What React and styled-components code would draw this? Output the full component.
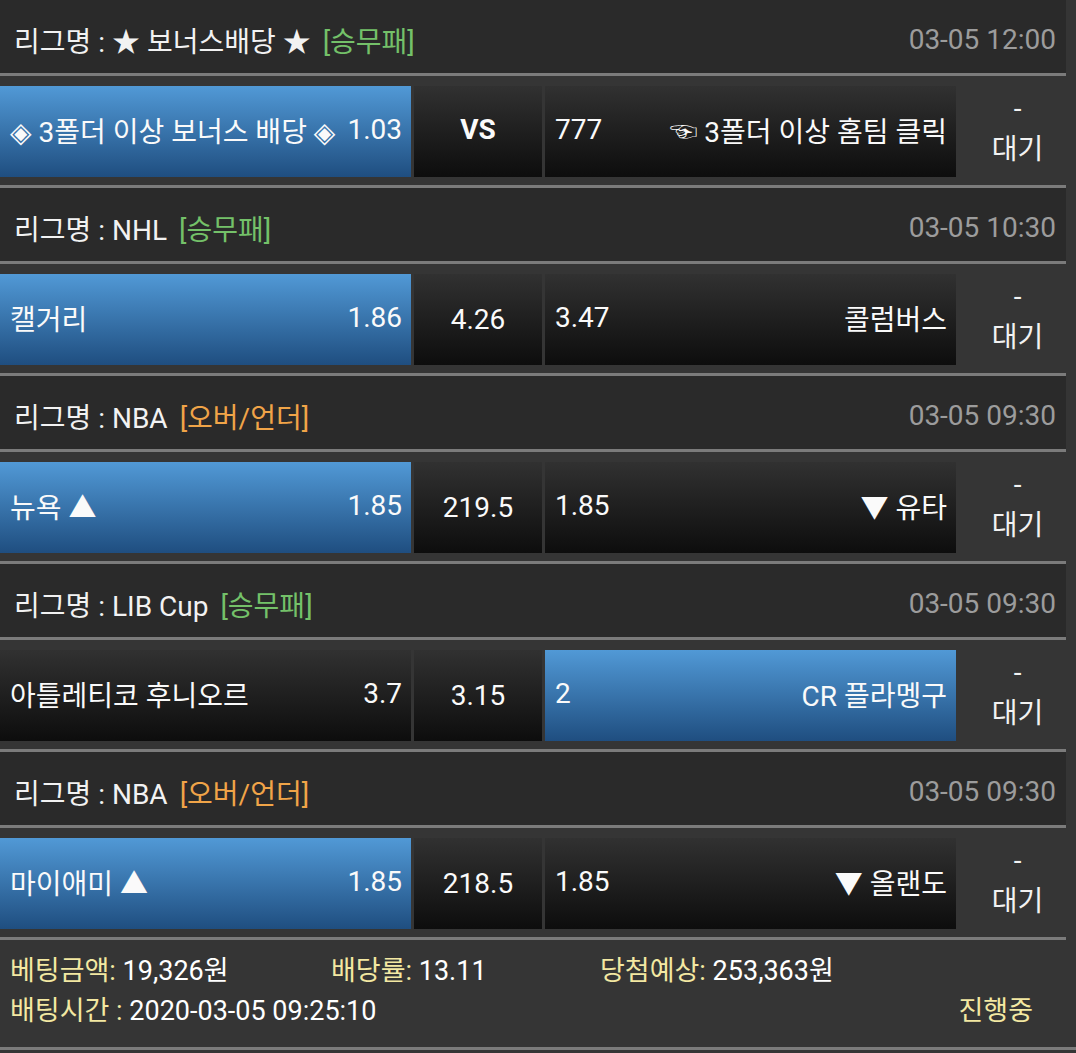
import styled, { createGlobalStyle } from "styled-components";

const GlobalStyle = createGlobalStyle`
  body {
    margin: 0;
    background: #353535;
    font-family: Roboto, "Noto Sans CJK KR", "DejaVu Sans", sans-serif;
  }
`;

const games = [
  {
    league: "★ 보너스배당 ★",
    tag: "[승무패]",
    tagType: "win",
    time: "03-05 12:00",
    home: "◈ 3폴더 이상 보너스 배당 ◈",
    homeOdds: "1.03",
    draw: "VS",
    awayOdds: "777",
    away: "☜ 3폴더 이상 홈팀 클릭",
    pick: "home",
    bold: true,
  },
  {
    league: "NHL",
    tag: "[승무패]",
    tagType: "win",
    time: "03-05 10:30",
    home: "캘거리",
    homeOdds: "1.86",
    draw: "4.26",
    awayOdds: "3.47",
    away: "콜럼버스",
    pick: "home",
  },
  {
    league: "NBA",
    tag: "[오버/언더]",
    tagType: "ou",
    time: "03-05 09:30",
    home: "뉴욕 ▲",
    homeOdds: "1.85",
    draw: "219.5",
    awayOdds: "1.85",
    away: "▼ 유타",
    pick: "home",
  },
  {
    league: "LIB Cup",
    tag: "[승무패]",
    tagType: "win",
    time: "03-05 09:30",
    home: "아틀레티코 후니오르",
    homeOdds: "3.7",
    draw: "3.15",
    awayOdds: "2",
    away: "CR 플라멩구",
    pick: "away",
  },
  {
    league: "NBA",
    tag: "[오버/언더]",
    tagType: "ou",
    time: "03-05 09:30",
    home: "마이애미 ▲",
    homeOdds: "1.85",
    draw: "218.5",
    awayOdds: "1.85",
    away: "▼ 올랜도",
    pick: "home",
  },
];

function App() {
  return (
    <>
      <GlobalStyle />
      <Page>
        {games.map((g, i) => (
          <section key={i}>
            <Header>
              <League>
                리그명 : {g.league}
                <Tag $type={g.tagType}>{g.tag}</Tag>
              </League>
              <Time>{g.time}</Time>
            </Header>
            <Divider />
            <MatchRow>
              <Cell $active={g.pick === "home"}>
                <span>{g.home}</span>
                <span>{g.homeOdds}</span>
              </Cell>
              <DrawCell $bold={g.bold}>{g.draw}</DrawCell>
              <Cell $active={g.pick === "away"}>
                <span>{g.awayOdds}</span>
                <span>{g.away}</span>
              </Cell>
              <Status>
                <span>-</span>
                <span>대기</span>
              </Status>
            </MatchRow>
            <Divider />
          </section>
        ))}
        <Footer>
          <Info>
            <Label>베팅금액:</Label> 19,326원
          </Info>
          <Info>
            <Label>배당률:</Label> 13.11
          </Info>
          <Info>
            <Label>당첨예상:</Label> 253,363원
          </Info>
          <Info>
            <Label>배팅시간 :</Label> 2020-03-05 09:25:10
          </Info>
          <Info />
          <State>진행중</State>
        </Footer>
      </Page>
    </>
  );
}

export default App;

const Page = styled.div`
  width: 1076px;
  background: #353535;
`;

const Header = styled.div`
  display: flex;
  align-items: center;
  justify-content: space-between;
  height: 73px;
  padding: 6px 10px 0 14px;
  box-sizing: border-box;
  margin-right: 10px;
  background: #2a2a2a;
  font-size: 28px;
`;

const League = styled.div`
  color: #f2f2f2;
  white-space: nowrap;
`;

const Tag = styled.span`
  margin-left: 12px;
  color: ${(p) => (p.$type === "ou" ? "#f0a448" : "#74c169")};
`;

const Time = styled.div`
  color: #9c9c9c;
`;

const Divider = styled.div`
  height: 3px;
  margin-right: 10px;
  background: #7b7b7b;
`;

const MatchRow = styled.div`
  display: grid;
  grid-template-columns: 411px 128px 411px 1fr;
  column-gap: 3px;
  height: 109px;
  padding: 10px 0 8px;
  box-sizing: border-box;
  background: #353535;
  font-size: 28px;
  color: #fafafa;
`;

const Cell = styled.div`
  display: flex;
  align-items: center;
  justify-content: space-between;
  padding: 0 9px 4px 10px;
  white-space: nowrap;
  background: ${(p) =>
    p.$active
      ? "linear-gradient(to bottom, #5199d6, #1f4e80)"
      : "linear-gradient(to bottom, #313131, #0d0d0d)"};
`;

const DrawCell = styled.div`
  display: flex;
  align-items: center;
  justify-content: center;
  padding-bottom: ${(p) => (p.$bold ? "4px" : "0")};
  font-weight: ${(p) => (p.$bold ? 700 : 400)};
  background: linear-gradient(to bottom, #313131, #0d0d0d);
`;

const Status = styled.div`
  display: flex;
  flex-direction: column;
  align-items: center;
  justify-content: center;
  line-height: 41px;
  margin-top: -6px;
  color: #f2f2f2;
`;

const Footer = styled.div`
  display: grid;
  grid-template-columns: 321px 269px 1fr;
  grid-auto-rows: 40px;
  align-items: center;
  padding: 8px 43px 10px 10px;
  height: 110px;
  box-sizing: border-box;
  border-bottom: 3px solid #7b7b7b;
  font-size: 27px;
  color: #ffffff;
`;

const Info = styled.div`
  white-space: nowrap;
`;

const Label = styled.span`
  color: #f3e8a2;
`;

const State = styled.div`
  text-align: right;
  color: #f3e8a2;
`;
